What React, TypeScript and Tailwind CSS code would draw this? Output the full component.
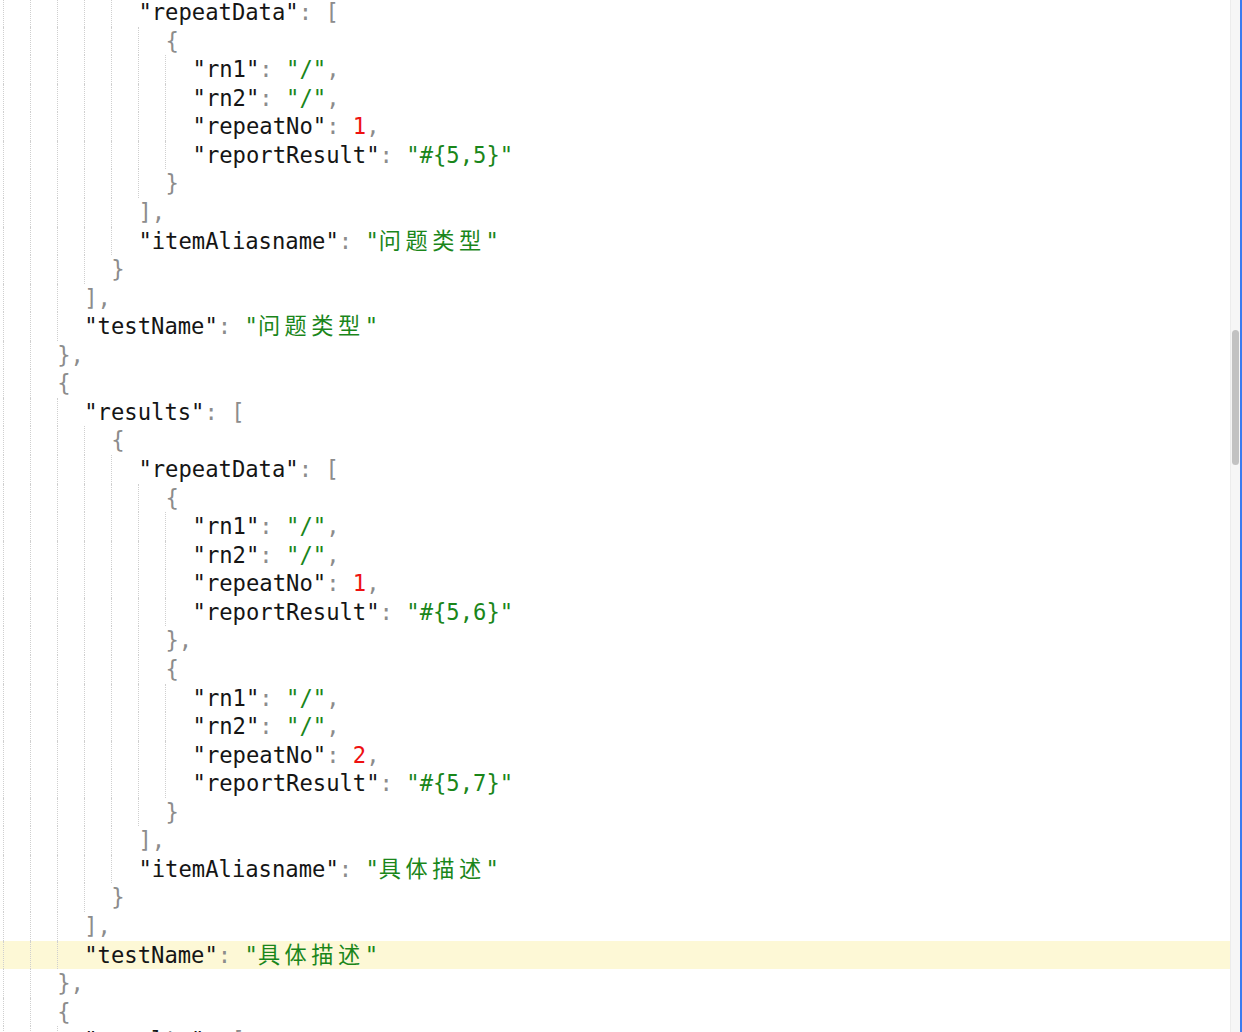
type Kind = "k" | "p" | "s" | "n" | "c";
type Part = [string, Kind];
type Line = { lvl: number; parts: Part[]; hl?: boolean };

const color: Record<Kind, string> = {
  k: "text-[#151515]",
  p: "text-[#8c8c8c]",
  s: "text-[#1a861a]",
  n: "text-[#ee1111]",
  c: "text-[#1a861a] tracking-[4.5px]",
};

const key = (k: string): Part[] => [[`"${k}"`, "k"], [": ", "p"]];
const str = (v: string, comma = false): Part[] => {
  const out: Part[] = [[`"${v}"`, "s"]];
  if (comma) out.push([",", "p"]);
  return out;
};
const cjk = (v: string): Part[] => [['"', "s"], [v, "c"], ['"', "s"]];
const num = (v: number): Part[] => [[String(v), "n"], [",", "p"]];
const p = (s: string): Part[] => [[s, "p"]];

const item = (lvl: number, no: number, res: string, close: string): Line[] => [
  { lvl, parts: p("{") },
  { lvl: lvl + 1, parts: [...key("rn1"), ...str("/", true)] },
  { lvl: lvl + 1, parts: [...key("rn2"), ...str("/", true)] },
  { lvl: lvl + 1, parts: [...key("repeatNo"), ...num(no)] },
  { lvl: lvl + 1, parts: [...key("reportResult"), ...str(res)] },
  { lvl, parts: p(close) },
];

const lines: Line[] = [
  { lvl: 5, parts: [...key("repeatData"), ...p("[")] },
  ...item(6, 1, "#{5,5}", "}"),
  { lvl: 5, parts: p("],") },
  { lvl: 5, parts: [...key("itemAliasname"), ...cjk("问题类型")] },
  { lvl: 4, parts: p("}") },
  { lvl: 3, parts: p("],") },
  { lvl: 3, parts: [...key("testName"), ...cjk("问题类型")] },
  { lvl: 2, parts: p("},") },
  { lvl: 2, parts: p("{") },
  { lvl: 3, parts: [...key("results"), ...p("[")] },
  { lvl: 4, parts: p("{") },
  { lvl: 5, parts: [...key("repeatData"), ...p("[")] },
  ...item(6, 1, "#{5,6}", "},"),
  ...item(6, 2, "#{5,7}", "}"),
  { lvl: 5, parts: p("],") },
  { lvl: 5, parts: [...key("itemAliasname"), ...cjk("具体描述")] },
  { lvl: 4, parts: p("}") },
  { lvl: 3, parts: p("],") },
  { lvl: 3, parts: [...key("testName"), ...cjk("具体描述")], hl: true },
  { lvl: 2, parts: p("},") },
  { lvl: 2, parts: p("{") },
  { lvl: 3, parts: [...key("results"), ...p("[")] },
];

function CodeLine({ line }: { line: Line }) {
  return (
    <div
      className={`flex h-[28.57px] shrink-0 pl-[3px] leading-[28.57px] whitespace-pre ${
        line.hl ? "bg-[#fdf8d6]" : ""
      }`}
    >
      {Array.from({ length: line.lvl }).map((_, i) => (
        <span key={i} className="w-[27.09px] shrink-0 border-l border-dotted border-[#cfcfcf]" />
      ))}
      {line.parts.map(([text, kind], i) => (
        <span key={i} className={color[kind]}>
          {text}
        </span>
      ))}
    </div>
  );
}

export default function App() {
  return (
    <div className="flex h-[1032px] w-[1242px] overflow-hidden bg-white">
      <div className="flex min-w-0 flex-1 flex-col font-['DejaVu_Sans_Mono','Noto_Sans_CJK_SC',monospace] text-[22.2px]">
        <div className="mt-[-2px] flex flex-col">
          {lines.map((line, i) => (
            <CodeLine key={i} line={line} />
          ))}
        </div>
      </div>
      {/* scrollbar */}
      <div className="w-[10px] shrink-0 border-l border-[#ececec] bg-[#f6f6f6] px-[1px]">
        <div className="mt-[330px] h-[135px] rounded-full bg-[#c2c2c2]" />
      </div>
      <div className="w-[2px] shrink-0 bg-[#3a7bf0]" />
    </div>
  );
}
